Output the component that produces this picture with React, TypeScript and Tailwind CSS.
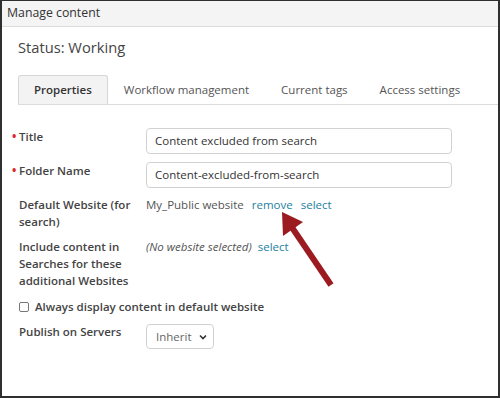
import { ReactNode } from 'react'

const font = { fontFamily: '"Open Sans", "Liberation Sans", sans-serif' }

function Row({ label, required, children, className = '' }: { label: ReactNode; required?: boolean; children?: ReactNode; className?: string }) {
  return (
    <div className={`flex items-start ${className}`}>
      <div className="relative w-[127px] shrink-0 pr-1 text-[11.5px] leading-[17px] font-semibold text-[#444]">
        {required && <span className="absolute -left-[7px] top-0 text-[#e0262b] font-bold">•</span>}
        {label}
      </div>
      <div className="flex-1">{children}</div>
    </div>
  )
}

function TextBox({ value }: { value: string }) {
  return (
    <div className="w-[306px] h-[26px] rounded-[4px] border border-[#d2d2d2] px-2 flex items-center text-[11.5px] text-[#333]">
      {value}
    </div>
  )
}

export default function App() {
  const tabs = ['Workflow management', 'Current tags', 'Access settings']

  return (
    <div style={font} className="relative w-[500px] h-[398px] bg-white border-t border-l-2 border-r-2 border-b-2 border-[#2f2f2f] overflow-hidden">
      <div className="h-[26px] bg-[#f4f4f4] border-b border-[#dcdcdc] pl-[5px] flex items-center text-[12.3px] text-[#333]">
        Manage content
      </div>

      <div className="pl-4">
        <div className="mt-[10px] text-[14.7px] leading-[20px] text-[#444]">Status: Working</div>

        <div className="mt-[18px] flex border-b border-[#dcdcdc] h-[30px] whitespace-nowrap">
          <div className="px-[15px] bg-[#f3f3f3] border border-b-0 border-[#d6d6d6] rounded-t-[3px] flex items-center text-[11.5px] font-semibold text-[#333]">
            Properties
          </div>
          {tabs.map((t) => (
            <div key={t} className="px-[16px] flex items-center text-[11.5px] text-[#555]">
              {t}
            </div>
          ))}
        </div>

        <div className="ml-px mt-[23px] flex flex-col">
          <Row label="Title" required>
            <TextBox value="Content excluded from search" />
          </Row>
          <Row label="Folder Name" required className="mt-[8px]">
            <TextBox value="Content-excluded-from-search" />
          </Row>
          <Row label={<>Default Website (for search)</>} className="mt-[8px]">
            <div className="flex gap-2 text-[11.5px] leading-[17px] text-[#555]">
              <span>My_Public website</span>
              <span className="text-[#24809f]">remove</span>
              <span className="text-[#24809f]">select</span>
            </div>
          </Row>
          <Row label="Include content in Searches for these additional Websites" className="mt-[8px]">
            <div className="flex gap-[6px] text-[11.5px] leading-[17px]">
              <span className="italic text-[#555]">(No website selected)</span>
              <span className="text-[#24809f]">select</span>
            </div>
          </Row>
          <div className="mt-[9px] flex items-center gap-[6px] text-[11.5px] leading-[17px] font-semibold text-[#444]">
            <span className="w-[10px] h-[10px] rounded-[2px] border border-[#777] bg-white" />
            Always display content in default website
          </div>
          <Row label="Publish on Servers" className="mt-[8px]">
            <div className="mt-[1px] w-[68px] h-[25px] rounded-[4px] border border-[#d2d2d2] pl-[9px] pr-[6px] flex items-center justify-between text-[11.5px] text-[#666]">
              <span>Inherit</span>
              <svg width="8" height="6" viewBox="0 0 8 6">
                <path d="M1 1.5 L4 4.5 L7 1.5" fill="none" stroke="#333" strokeWidth="1.6" />
              </svg>
            </div>
          </Row>
        </div>
      </div>

      <svg className="absolute left-[-2px] top-[-1px] pointer-events-none" width="500" height="398" viewBox="0 0 500 398">
        <line x1="291" y1="226" x2="331" y2="285" stroke="#9b1b20" strokeWidth="6" />
        <polygon points="282,212 283,236 303,222" fill="#9b1b20" />
      </svg>
    </div>
  )
}
